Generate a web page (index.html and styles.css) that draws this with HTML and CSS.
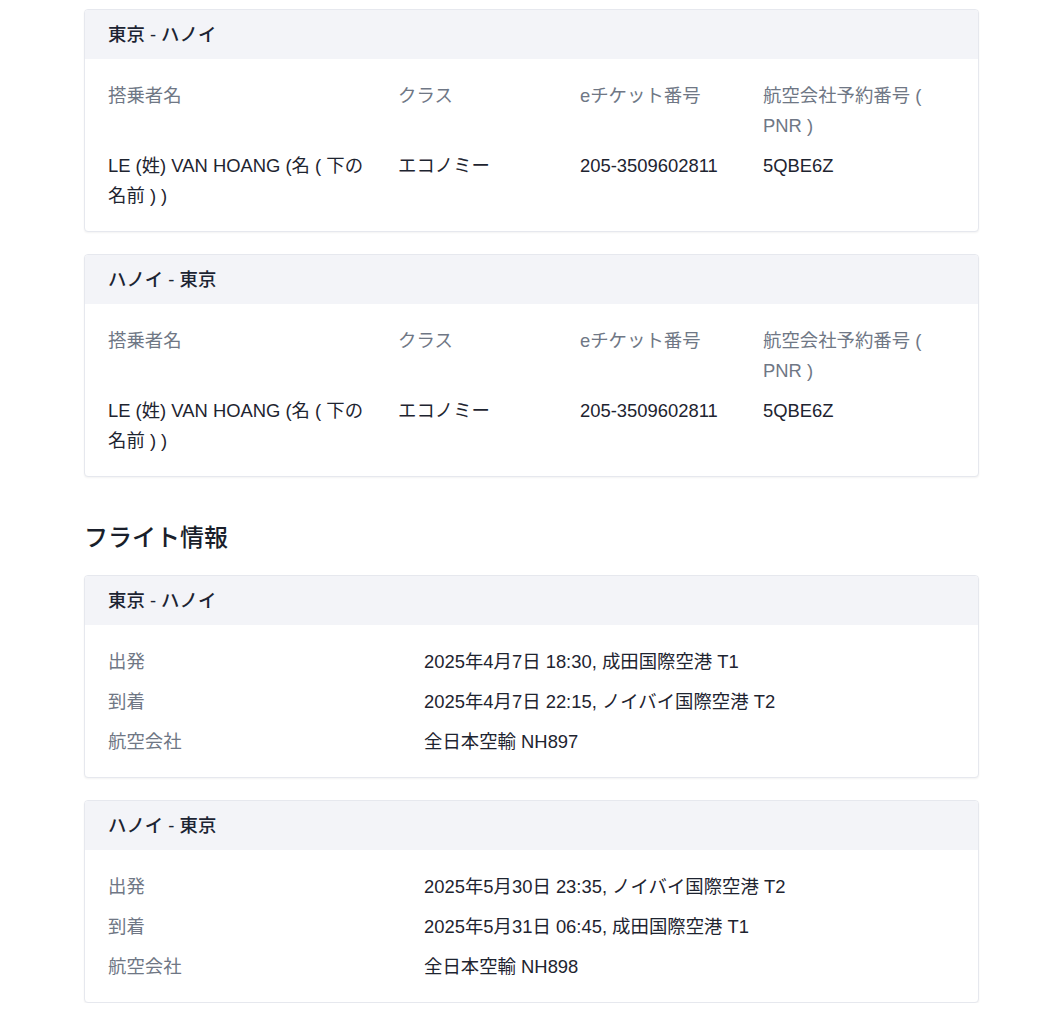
FILE: index.html
```html
<!DOCTYPE html>
<html lang="ja">
<head>
<meta charset="utf-8">
<title>予約詳細</title>
<link rel="stylesheet" href="styles.css">
</head>
<body>
<main class="page">
  <section class="card">
    <div class="card-head">東京 - ハノイ</div>
    <div class="card-body pax">
      <div class="lbl">搭乗者名</div>
      <div class="lbl">クラス</div>
      <div class="lbl">eチケット番号</div>
      <div class="lbl">航空会社予約番号 ( PNR )</div>
      <div class="val">LE (姓) VAN HOANG (名 ( 下の名前 ) )</div>
      <div class="val">エコノミー</div>
      <div class="val">205-3509602811</div>
      <div class="val">5QBE6Z</div>
    </div>
  </section>

  <section class="card">
    <div class="card-head">ハノイ - 東京</div>
    <div class="card-body pax">
      <div class="lbl">搭乗者名</div>
      <div class="lbl">クラス</div>
      <div class="lbl">eチケット番号</div>
      <div class="lbl">航空会社予約番号 ( PNR )</div>
      <div class="val">LE (姓) VAN HOANG (名 ( 下の名前 ) )</div>
      <div class="val">エコノミー</div>
      <div class="val">205-3509602811</div>
      <div class="val">5QBE6Z</div>
    </div>
  </section>

  <h2 class="section-title">フライト情報</h2>

  <section class="card">
    <div class="card-head">東京 - ハノイ</div>
    <div class="card-body flight">
      <div class="lbl">出発</div>
      <div class="val">2025年4月7日 18:30, 成田国際空港 T1</div>
      <div class="lbl">到着</div>
      <div class="val">2025年4月7日 22:15, ノイバイ国際空港 T2</div>
      <div class="lbl">航空会社</div>
      <div class="val">全日本空輸 NH897</div>
    </div>
  </section>

  <section class="card">
    <div class="card-head">ハノイ - 東京</div>
    <div class="card-body flight">
      <div class="lbl">出発</div>
      <div class="val">2025年5月30日 23:35, ノイバイ国際空港 T2</div>
      <div class="lbl">到着</div>
      <div class="val">2025年5月31日 06:45, 成田国際空港 T1</div>
      <div class="lbl">航空会社</div>
      <div class="val">全日本空輸 NH898</div>
    </div>
  </section>
</main>
</body>
</html>
```

FILE: styles.css
```css
html, body {
  margin: 0;
  padding: 0;
  background: #ffffff;
}
body {
  font-family: "Liberation Sans", "Noto Sans CJK JP", sans-serif;
  font-size: 18.4px;
  color: #1f2430;
}
.page {
  width: 895px;
  margin-left: 84px;
  padding-top: 9px;
  display: flex;
  flex-direction: column;
  gap: 22px;
}
.card {
  border: 1px solid #e6e8ee;
  border-radius: 4px;
  background: #fff;
  box-shadow: 0 1px 2px rgba(0,0,0,0.05);
  overflow: hidden;
}
.card-head {
  height: 49px;
  line-height: 49px;
  background: #f3f4f8;
  padding: 0 23px;
  color: #1c2433;
  font-weight: 500;
}
.card-body {
  padding: 22px 23px 20px;
  line-height: 30px;
}
.pax {
  display: grid;
  grid-template-columns: 290px 182px 183px 1fr;
  row-gap: 10px;
}
.pax > div {
  padding-right: 18px;
}
.pax > div:nth-child(4n+1) {
  padding-right: 28px;
}
.flight {
  display: grid;
  grid-template-columns: 316px 1fr;
  row-gap: 10px;
}
.lbl {
  color: #6f7785;
}
.val {
  color: #1e2430;
}
.section-title {
  margin: 23px 0 -1px;
  font-size: 24px;
  line-height: 32px;
  font-weight: 500;
  color: #1a1f2b;
}
```
